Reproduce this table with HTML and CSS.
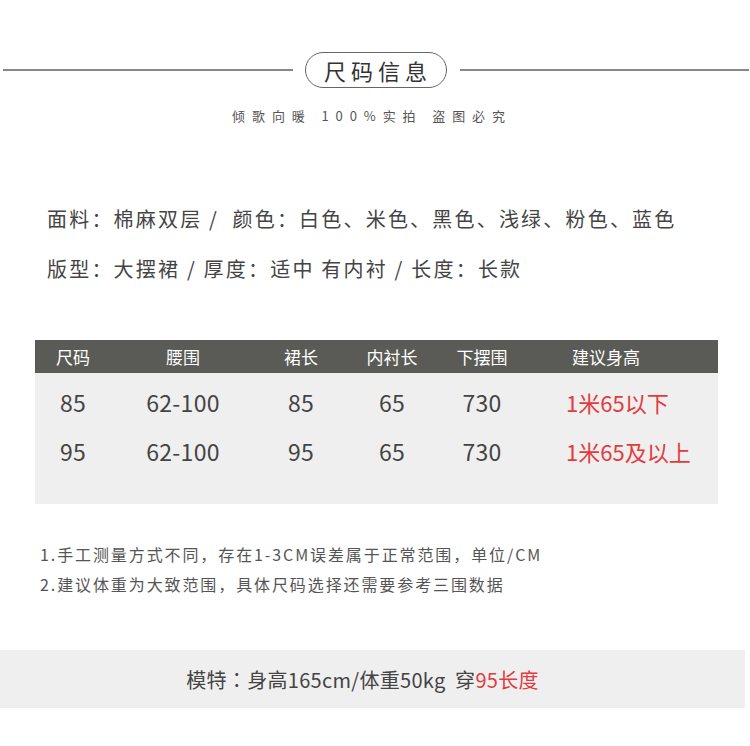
FILE: index.html
```html
<!DOCTYPE html>
<html lang="zh">
<head>
<meta charset="utf-8">
<title>尺码信息</title>
<link rel="stylesheet" href="styles.css">
</head>
<body>
<div class="page">
  <div class="title-row">
    <div class="line line-left"></div>
    <div class="pill">尺码信息</div>
    <div class="line line-right"></div>
  </div>
  <div class="subtitle">倾歌向暖 100%实拍 盗图必究</div>

  <div class="desc">
    <p>面料<span class="colon">：</span>棉麻双层 /&nbsp; 颜色<span class="colon">：</span>白色、米色、黑色、浅绿、粉色、蓝色</p>
    <p>版型<span class="colon">：</span>大摆裙 / 厚度<span class="colon">：</span>适中 有内衬 / 长度<span class="colon">：</span>长款</p>
  </div>

  <div class="table">
    <div class="thead">
      <span class="c">尺码</span>
      <span class="c">腰围</span>
      <span class="c">裙长</span>
      <span class="c">内衬长</span>
      <span class="c">下摆围</span>
      <span class="c last head-last">建议身高</span>
    </div>
    <div class="tbody">
      <div class="row">
        <span class="c">85</span>
        <span class="c">62-100</span>
        <span class="c">85</span>
        <span class="c">65</span>
        <span class="c">730</span>
        <span class="c last red">1米65以下</span>
      </div>
      <div class="row">
        <span class="c">95</span>
        <span class="c">62-100</span>
        <span class="c">95</span>
        <span class="c">65</span>
        <span class="c">730</span>
        <span class="c last red">1米65及以上</span>
      </div>
    </div>
  </div>

  <div class="notes">
    <p>1.手工测量方式不同<span class="colon">，</span>存在1-3CM误差属于正常范围<span class="colon">，</span>单位/CM</p>
    <p>2.建议体重为大致范围<span class="colon">，</span>具体尺码选择还需要参考三围数据</p>
  </div>

  <div class="model">模特<span class="colon">：</span>身高165cm/体重50kg&nbsp; 穿<span class="red">95长度</span></div>
</div>
</body>
</html>
```

FILE: styles.css
```css
* { box-sizing: border-box; }
html, body { margin: 0; padding: 0; background: #fff; }
body {
  font-family: "Noto Sans CJK SC", "Noto Sans", sans-serif;
  color: #444;
  width: 750px;
  text-spacing-trim: space-all;
}
p { margin: 0; }
.colon { font-family: "Noto Sans CJK TC", "Noto Sans CJK SC", sans-serif; }

.title-row {
  display: flex;
  align-items: center;
  padding-top: 52px;
}
.line {
  flex: 1;
  height: 2px;
  background: #888;
}
.line-left { margin-left: 3px; margin-right: 12px; }
.line-right { margin-left: 13px; margin-right: 1px; }
.pill {
  width: 142px;
  height: 36px;
  border: 1px solid #666;
  border-radius: 18px;
  display: flex;
  align-items: center;
  justify-content: center;
  font-size: 22px;
  line-height: 1;
  letter-spacing: 5px;
  padding-left: 5px;
  color: #333;
}

.subtitle {
  margin-top: 18px;
  text-align: center;
  font-size: 13px;
  line-height: 20px;
  letter-spacing: 6.9px;
  color: #555;
  padding-right: 6px;
}

.desc {
  margin-top: 68px;
  padding-left: 47px;
  font-size: 20px;
  line-height: 50px;
  letter-spacing: 2.2px;
  color: #444;
}

.table {
  margin-top: 46px;
  margin-left: 35px;
  width: 683px;
}
.thead, .row {
  display: grid;
  grid-template-columns: 76px 144px 92px 90px 90px 191px;
  align-items: center;
}
.thead {
  height: 33px;
  background: #5a5b56;
  color: #fff;
  font-size: 17px;
}
.tbody {
  background: #efefef;
  padding: 4px 0 29px;
}
.row {
  height: 49px;
  font-size: 23px;
  letter-spacing: 0.3px;
  color: #444;
}
.c { text-align: center; white-space: nowrap; }
.c.last { text-align: left; padding-left: 39px; letter-spacing: 0; font-size: 22px; }
.c.head-last { padding-left: 45px; font-size: 17px; }
.red { color: #e23b40; }

.notes {
  margin-top: 35px;
  padding-left: 40px;
  font-size: 16px;
  line-height: 30px;
  letter-spacing: 1.9px;
  color: #555;
}

.model {
  margin-top: 51px;
  width: 745px;
  height: 58px;
  background: #efefef;
  display: flex;
  align-items: center;
  justify-content: center;
  font-size: 20px;
  letter-spacing: 0.3px;
  color: #444;
  padding-right: 20px;
}
```
